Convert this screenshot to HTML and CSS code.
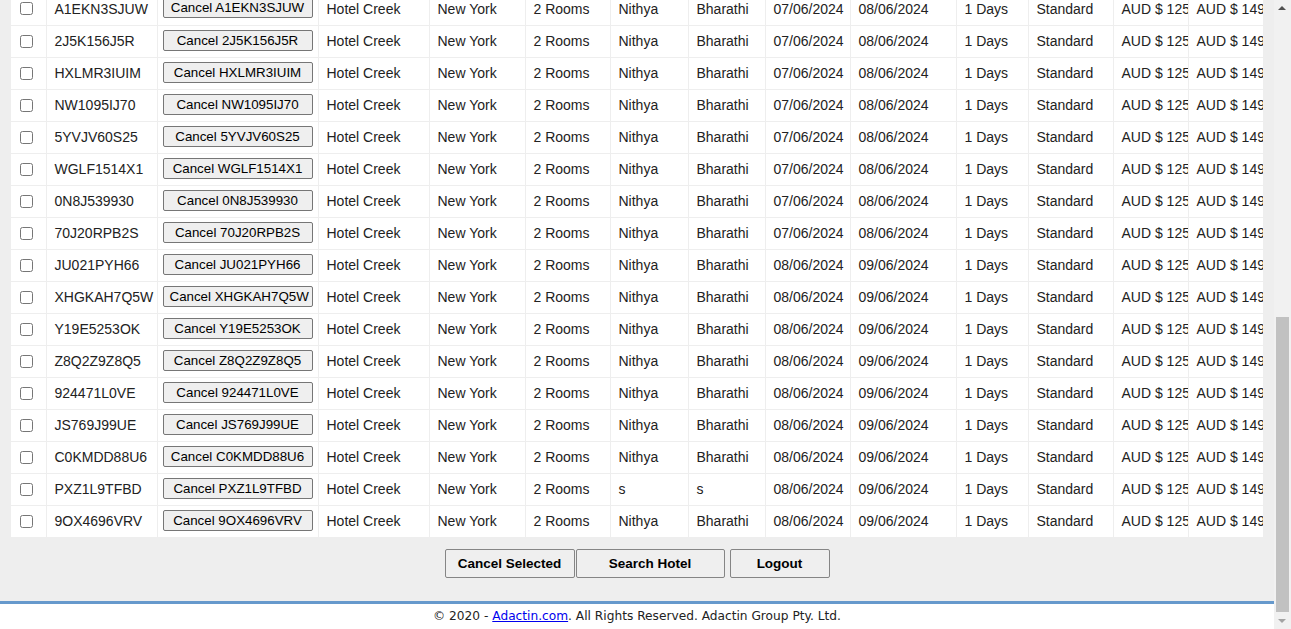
FILE: index.html
```html
<!DOCTYPE html>
<html>
<head>
<meta charset="utf-8">
<link rel="stylesheet" href="styles.css">
</head>
<body>
<div class="page">
  <main class="content">
    <div class="table-wrap">
      <table class="bookings">
        <colgroup>
          <col class="c-check"><col class="c-ref"><col class="c-btn"><col class="c-hotel"><col class="c-loc"><col class="c-rooms"><col class="c-fn"><col class="c-ln"><col class="c-arr"><col class="c-dep"><col class="c-days"><col class="c-type"><col class="c-price"><col class="c-total">
        </colgroup>
        <tbody id="rows"></tbody>
      </table>
    </div>
    <div class="actions">
      <button class="act act-cancel">Cancel Selected</button><button class="act act-search">Search Hotel</button><button class="act act-logout">Logout</button>
    </div>
  </main>
  <footer class="footer">
    <p>© 2020 - <a href="#">Adactin.com</a>. All Rights Reserved. Adactin Group Pty. Ltd.</p>
  </footer>
</div>
<div class="scrollbar">
  <div class="arrow arrow-up"></div>
  <div class="thumb"></div>
  <div class="arrow arrow-down"></div>
</div>
<script>
var data = [
  ["A1EKN3SJUW","Nithya","Bharathi","07/06/2024","08/06/2024"],
  ["2J5K156J5R","Nithya","Bharathi","07/06/2024","08/06/2024"],
  ["HXLMR3IUIM","Nithya","Bharathi","07/06/2024","08/06/2024"],
  ["NW1095IJ70","Nithya","Bharathi","07/06/2024","08/06/2024"],
  ["5YVJV60S25","Nithya","Bharathi","07/06/2024","08/06/2024"],
  ["WGLF1514X1","Nithya","Bharathi","07/06/2024","08/06/2024"],
  ["0N8J539930","Nithya","Bharathi","07/06/2024","08/06/2024"],
  ["70J20RPB2S","Nithya","Bharathi","07/06/2024","08/06/2024"],
  ["JU021PYH66","Nithya","Bharathi","08/06/2024","09/06/2024"],
  ["XHGKAH7Q5W","Nithya","Bharathi","08/06/2024","09/06/2024"],
  ["Y19E5253OK","Nithya","Bharathi","08/06/2024","09/06/2024"],
  ["Z8Q2Z9Z8Q5","Nithya","Bharathi","08/06/2024","09/06/2024"],
  ["924471L0VE","Nithya","Bharathi","08/06/2024","09/06/2024"],
  ["JS769J99UE","Nithya","Bharathi","08/06/2024","09/06/2024"],
  ["C0KMDD88U6","Nithya","Bharathi","08/06/2024","09/06/2024"],
  ["PXZ1L9TFBD","s","s","08/06/2024","09/06/2024"],
  ["9OX4696VRV","Nithya","Bharathi","08/06/2024","09/06/2024"]
];
var tb = document.getElementById("rows");
var html = "";
data.forEach(function(r){
  html += '<tr>' +
    '<td class="chk"><input type="checkbox"></td>' +
    '<td>' + r[0] + '</td>' +
    '<td class="btncell"><button class="cancel-btn">Cancel ' + r[0] + '</button></td>' +
    '<td>Hotel Creek</td>' +
    '<td>New York</td>' +
    '<td>2 Rooms</td>' +
    '<td>' + r[1] + '</td>' +
    '<td>' + r[2] + '</td>' +
    '<td>' + r[3] + '</td>' +
    '<td>' + r[4] + '</td>' +
    '<td>1 Days</td>' +
    '<td>Standard</td>' +
    '<td>AUD $ 125</td>' +
    '<td>AUD $ 149</td>' +
    '</tr>';
});
tb.innerHTML = html;
</script>
</body>
</html>
```

FILE: styles.css
```css
html, body {
  margin: 0;
  padding: 0;
  height: 100%;
  overflow: hidden;
}
body {
  background: #ffffff;
  font-family: "Liberation Sans", Arial, sans-serif;
}
.page {
  margin-right: 17px;
  display: flex;
  flex-direction: column;
}
.content {
  background: #eeeeee;
  height: 601px;
  display: flex;
  flex-direction: column;
  box-sizing: border-box;
}
.table-wrap {
  margin: -7px 0 0 11px;
  width: 1252px;
  overflow: hidden;
  background: #ffffff;
}
.bookings {
  table-layout: fixed;
  border-collapse: collapse;
  width: 1252px;
  font-size: 14px;
  color: #222;
}
.c-check { width: 35px; }
.c-ref { width: 111px; }
.c-btn { width: 161px; }
.c-hotel { width: 111px; }
.c-loc { width: 96px; }
.c-rooms { width: 85px; }
.c-fn { width: 78px; }
.c-ln { width: 77px; }
.c-arr { width: 85px; }
.c-dep { width: 106px; }
.c-days { width: 72px; }
.c-type { width: 85px; }
.c-price { width: 75px; }
.c-total { width: 75px; }
.bookings td {
  height: 32px;
  padding: 0 0 0 8px;
  border: 1px solid #eeeeee;
  white-space: nowrap;
  overflow: hidden;
  vertical-align: middle;
  box-sizing: border-box;
}
.bookings tr:first-child td { border-top: none; }
.bookings tr:last-child td { border-bottom: none; }
.bookings td:first-child { border-left: none; }
.bookings td.chk { padding-left: 5px; }
.bookings td.chk input {
  margin: 3px 3px 3px 4px;
  vertical-align: middle;
}
.bookings td.btncell { padding-left: 5px; }
.cancel-btn {
  width: 150px;
  height: 21px;
  padding: 1px 6px;
  font-family: "Liberation Sans", Arial, sans-serif;
  font-size: 13.333px;
  color: #000;
  background: #efefef;
  border: 1px solid #767676;
  border-radius: 2px;
  white-space: nowrap;
  overflow: hidden;
  vertical-align: middle;
  position: relative;
  top: -1px;
}
.actions {
  display: flex;
  justify-content: center;
  padding-top: 12px;
}
.act {
  height: 29px;
  font-family: "Liberation Sans", Arial, sans-serif;
  font-weight: bold;
  font-size: 13.5px;
  color: #000;
  background: #efefef;
  border: 1px solid #858585;
  border-radius: 2px;
  padding: 0;
}
.act-cancel { width: 130px; }
.act-search { width: 149px; margin-left: 1px; }
.act-logout { width: 100px; margin-left: 5px; }
.footer {
  border-top: 3px solid #6699cc;
  background: #ffffff;
  height: 25px;
  text-align: center;
}
.footer p {
  margin: 0;
  padding-top: 5px;
  font-family: "DejaVu Sans", Verdana, sans-serif;
  font-size: 12.2px;
  color: #222;
}
.footer a { color: #0000ee; }
.scrollbar {
  position: fixed;
  top: 0;
  right: 0;
  width: 17px;
  height: 100%;
  background: #f1f1f1;
}
.thumb {
  position: absolute;
  left: 2px;
  width: 13px;
  top: 317px;
  height: 295px;
  background: #c1c1c1;
}
.arrow {
  position: absolute;
  left: 4px;
  width: 0;
  height: 0;
  border-left: 4px solid transparent;
  border-right: 4px solid transparent;
}
.arrow-up {
  top: 6px;
  border-bottom: 4px solid #505050;
}
.arrow-down {
  bottom: 6px;
  border-top: 4px solid #a3a3a3;
}
```
